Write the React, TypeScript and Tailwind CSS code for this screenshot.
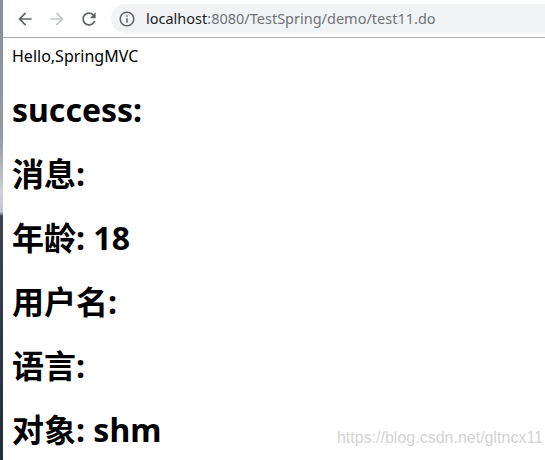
const font = "font-['Noto_Sans','Noto_Sans_CJK_SC',sans-serif]";

const rows = [
  { label: "success:", value: "" },
  { label: "消息:", value: "" },
  { label: "年龄:", value: "18" },
  { label: "用户名:", value: "" },
  { label: "语言:", value: "" },
  { label: "对象:", value: "shm" },
];

const BackIcon = () => (
  <svg viewBox="0 0 24 24" className="h-5 w-5 fill-[#5f6368]">
    <path d="M20 11H7.83l5.59-5.59L12 4l-8 8 8 8 1.41-1.41L7.83 13H20v-2z" />
  </svg>
);

const ForwardIcon = () => (
  <svg viewBox="0 0 24 24" className="h-5 w-5 fill-[#c4c7ca]">
    <path d="M12 4l-1.41 1.41L16.17 11H4v2h12.17l-5.58 5.59L12 20l8-8z" />
  </svg>
);

const ReloadIcon = () => (
  <svg viewBox="0 0 24 24" className="h-5 w-5 fill-[#5f6368]">
    <path d="M17.65 6.35C16.2 4.9 14.21 4 12 4c-4.42 0-7.99 3.58-7.99 8s3.57 8 7.99 8c3.73 0 6.84-2.55 7.730-6h-2.08c-.82 2.33-3.04 4-5.65 4-3.31 0-6-2.69-6-6s2.690-6 6-6c1.66 0 3.14.69 4.22 1.78L13 11h7V4l-2.35 2.35z" />
  </svg>
);

const InfoIcon = () => (
  <svg viewBox="0 0 24 24" className="h-[18px] w-[18px] fill-[#5f6368]">
    <path d="M11 7h2v2h-2zm0 4h2v6h-2zm1-9C6.48 2 2 6.48 2 12s4.48 10 10 10 10-4.48 10-10S17.52 2 12 2zm0 18c-4.41 0-8-3.59-8-8s3.59-8 8-8 8 3.59 8 8-3.59 8-8 8z" />
  </svg>
);

export default function App() {
  return (
    <div className={`flex h-[460px] w-[545px] overflow-hidden bg-white ${font}`}>
      <div className="w-[3px] shrink-0 bg-[linear-gradient(to_bottom,#8a8f99_0%,#959aa3_30%,#cdd0d5_42%,#c4c8ce_46%,#3d4354_47%,#262b38_100%)]" />
      <div className="relative flex min-w-0 flex-1 flex-col">
        <div className="flex h-[38px] shrink-0 items-center gap-3 border-b border-[#a9acb1] pl-3">
          <BackIcon />
          <ForwardIcon />
          <ReloadIcon />
          <div className="flex h-[29px] flex-1 items-center gap-[10px] rounded-l-full bg-[#f1f3f4] pl-[7px] text-[14.5px] whitespace-nowrap">
            <InfoIcon />
            <span>
              <span className="text-[#202124]">localhost</span>
              <span className="text-[#6f7378]">:8080/TestSpring/demo/test11.do</span>
            </span>
          </div>
        </div>
        <div className="flex-1 pl-[9px] pt-2 text-black">
          <p className="text-[16px] leading-[21px]">Hello,SpringMVC</p>
          {rows.map((row) => (
            <h1
              key={row.label}
              className="my-[21px] text-[32px] leading-[43px] font-bold"
            >
              {row.label} {row.value}
            </h1>
          ))}
        </div>
        <span className="absolute right-[2px] bottom-[10px] font-['Liberation_Sans',sans-serif] text-[16px] text-[#d4d4d4]">
          https://blog.csdn.net/gltncx11
        </span>
      </div>
    </div>
  );
}
